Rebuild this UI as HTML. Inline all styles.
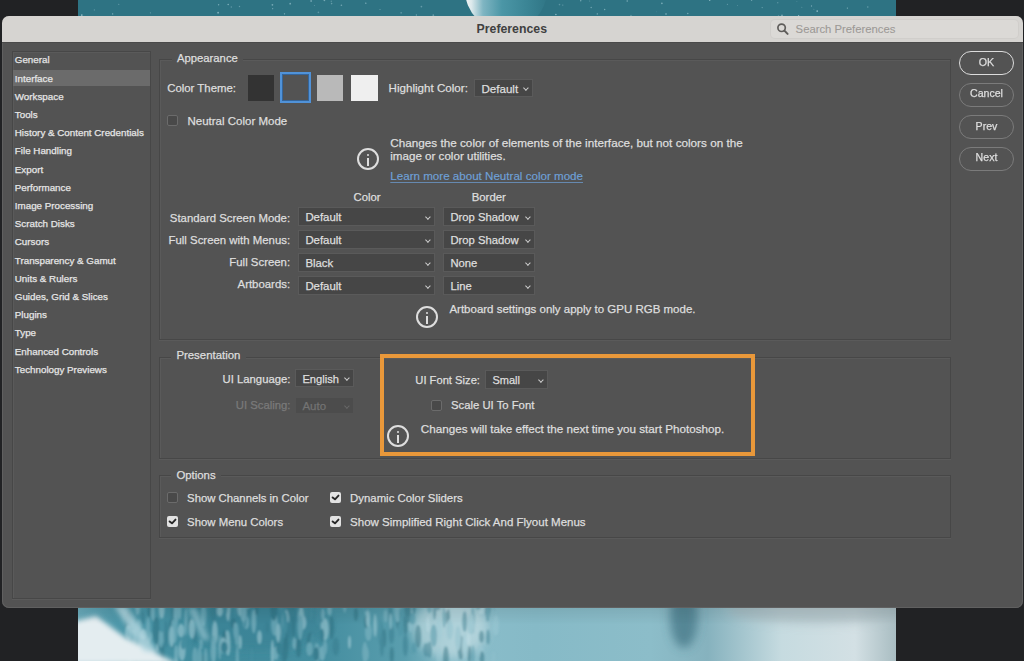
<!DOCTYPE html>
<html><head><meta charset="utf-8"><style>
*{margin:0;padding:0;box-sizing:border-box}
html,body{width:1024px;height:661px;overflow:hidden;background:#212224;font-family:"Liberation Sans",sans-serif}
.a{position:absolute}
.t{position:absolute;white-space:nowrap;line-height:1;color:#dedede;-webkit-text-stroke:0.25px currentColor}
.dd{position:absolute;background:#464646;box-shadow:0 0 0 1px #5a5a5a}
.chev{position:absolute;width:3.8px;height:3.8px;border-right:1.2px solid #d0d0d0;border-bottom:1.2px solid #d0d0d0;transform:rotate(45deg)}
.cb{position:absolute;width:11px;height:11px;background:#494949;border:1px solid #6b6b6b;border-radius:2px}
.cbc{position:absolute;width:11px;height:11px;background:#e2e2e2;border-radius:2px}
.box{position:absolute;border:1px solid #474747;box-shadow:0 1px 0 #5a5a5a, inset 1px 1px 0 #5a5a5a}
.btn{position:absolute;border-radius:12px;border:1.5px solid #7b7b7b}
.info{position:absolute;width:22px;height:22px;border:2px solid #dedede;border-radius:50%}
.info:before{content:"";position:absolute;left:7.6px;top:3.5px;width:2.8px;height:2.7px;background:#dedede;border-radius:1.2px}
.info:after{content:"";position:absolute;left:7.6px;top:7.7px;width:2.8px;height:8.2px;background:#dedede}
</style></head><body>
<div class="a" style="left:78px;top:0px;width:818px;height:661px;background:#2e7383;"></div>
<svg class="a" style="left:78px;top:0" width="818" height="16"><circle cx="194.7" cy="8.7" r="0.58" fill="#9cc6d0" opacity="0.70"/><circle cx="511.8" cy="1.0" r="0.41" fill="#9cc6d0" opacity="0.82"/><circle cx="212.2" cy="3.7" r="0.90" fill="#9cc6d0" opacity="0.64"/><circle cx="684.2" cy="7.6" r="0.72" fill="#9cc6d0" opacity="0.48"/><circle cx="519.3" cy="13.9" r="0.66" fill="#9cc6d0" opacity="0.77"/><circle cx="549.2" cy="1.0" r="0.78" fill="#9cc6d0" opacity="0.70"/><circle cx="246.4" cy="0.5" r="0.83" fill="#9cc6d0" opacity="0.64"/><circle cx="588.0" cy="14.1" r="0.76" fill="#9cc6d0" opacity="0.86"/><circle cx="323.1" cy="12.8" r="0.62" fill="#9cc6d0" opacity="0.87"/><circle cx="718.9" cy="1.6" r="0.47" fill="#9cc6d0" opacity="0.51"/><circle cx="789.8" cy="7.0" r="0.71" fill="#9cc6d0" opacity="0.55"/><circle cx="414.9" cy="6.2" r="0.58" fill="#9cc6d0" opacity="0.69"/><circle cx="477.9" cy="14.5" r="0.74" fill="#9cc6d0" opacity="0.86"/><circle cx="700.5" cy="15.9" r="0.74" fill="#9cc6d0" opacity="0.48"/><circle cx="704.0" cy="15.4" r="0.85" fill="#9cc6d0" opacity="0.68"/><circle cx="583.9" cy="3.4" r="0.82" fill="#9cc6d0" opacity="0.69"/><circle cx="233.1" cy="1.0" r="0.83" fill="#9cc6d0" opacity="0.89"/><circle cx="72.4" cy="12.8" r="0.61" fill="#9cc6d0" opacity="0.48"/><circle cx="240.4" cy="12.3" r="0.84" fill="#9cc6d0" opacity="0.42"/><circle cx="502.7" cy="0.7" r="0.76" fill="#9cc6d0" opacity="0.57"/><circle cx="720.6" cy="15.7" r="0.65" fill="#9cc6d0" opacity="0.90"/><circle cx="253.3" cy="1.2" r="0.70" fill="#9cc6d0" opacity="0.42"/><circle cx="161.5" cy="6.5" r="0.71" fill="#9cc6d0" opacity="0.48"/><circle cx="34.7" cy="13.9" r="0.56" fill="#9cc6d0" opacity="0.88"/><circle cx="733.5" cy="6.0" r="0.63" fill="#9cc6d0" opacity="0.66"/><circle cx="526.7" cy="9.5" r="0.68" fill="#9cc6d0" opacity="0.71"/><circle cx="769.4" cy="8.1" r="0.62" fill="#9cc6d0" opacity="0.76"/><circle cx="194.4" cy="4.8" r="0.89" fill="#9cc6d0" opacity="0.66"/><circle cx="448.6" cy="0.2" r="0.61" fill="#9cc6d0" opacity="0.69"/><circle cx="16.4" cy="9.9" r="0.72" fill="#9cc6d0" opacity="0.43"/><circle cx="513.2" cy="7.5" r="0.74" fill="#9cc6d0" opacity="0.58"/><circle cx="578.3" cy="11.8" r="0.41" fill="#9cc6d0" opacity="0.43"/><circle cx="553.0" cy="15.4" r="0.53" fill="#9cc6d0" opacity="0.63"/><circle cx="484.8" cy="5.1" r="0.58" fill="#9cc6d0" opacity="0.56"/><circle cx="302.0" cy="9.5" r="0.55" fill="#9cc6d0" opacity="0.59"/><circle cx="631.7" cy="0.4" r="0.68" fill="#9cc6d0" opacity="0.77"/><circle cx="253.6" cy="3.6" r="0.80" fill="#9cc6d0" opacity="0.52"/><circle cx="153.3" cy="7.0" r="0.75" fill="#9cc6d0" opacity="0.45"/><circle cx="263.4" cy="5.3" r="0.82" fill="#9cc6d0" opacity="0.62"/><circle cx="699.8" cy="2.7" r="0.57" fill="#9cc6d0" opacity="0.73"/><circle cx="723.8" cy="7.2" r="0.51" fill="#9cc6d0" opacity="0.46"/><circle cx="433.2" cy="3.1" r="0.80" fill="#9cc6d0" opacity="0.82"/><circle cx="150.2" cy="4.5" r="0.80" fill="#9cc6d0" opacity="0.72"/><circle cx="659.5" cy="5.5" r="0.46" fill="#9cc6d0" opacity="0.55"/><circle cx="649.4" cy="4.3" r="0.57" fill="#9cc6d0" opacity="0.61"/><circle cx="343.4" cy="6.6" r="0.86" fill="#9cc6d0" opacity="0.48"/><circle cx="3.8" cy="15.1" r="0.84" fill="#9cc6d0" opacity="0.89"/><circle cx="355.3" cy="15.2" r="0.86" fill="#9cc6d0" opacity="0.51"/><circle cx="609.8" cy="13.4" r="0.73" fill="#9cc6d0" opacity="0.66"/><circle cx="236.4" cy="5.5" r="0.51" fill="#9cc6d0" opacity="0.43"/><circle cx="481.5" cy="4.6" r="0.81" fill="#9cc6d0" opacity="0.42"/><circle cx="739.2" cy="11.1" r="0.86" fill="#9cc6d0" opacity="0.85"/><circle cx="735.9" cy="9.2" r="0.41" fill="#9cc6d0" opacity="0.77"/><circle cx="140.6" cy="4.8" r="0.73" fill="#9cc6d0" opacity="0.66"/><circle cx="338.4" cy="15.0" r="0.71" fill="#9cc6d0" opacity="0.57"/><circle cx="206.5" cy="13.8" r="0.64" fill="#9cc6d0" opacity="0.79"/><circle cx="287.8" cy="3.2" r="0.67" fill="#9cc6d0" opacity="0.81"/><circle cx="140.1" cy="12.7" r="0.86" fill="#9cc6d0" opacity="0.80"/><circle cx="673.6" cy="0.1" r="0.71" fill="#9cc6d0" opacity="0.83"/><circle cx="40.8" cy="4.3" r="0.53" fill="#9cc6d0" opacity="0.66"/></svg>
<svg class="a" style="left:78px;top:0" width="818" height="20"><defs><linearGradient id="pl" x1="0" x2="1" y1="0" y2="0"><stop offset="0" stop-color="#f2f6f7"/><stop offset="0.08" stop-color="#dce9ec"/><stop offset="0.22" stop-color="#7fb5c2"/><stop offset="0.45" stop-color="#4b96a6"/><stop offset="0.75" stop-color="#3b8595"/><stop offset="1" stop-color="#307686"/></linearGradient></defs><circle cx="428" cy="-10" r="41" fill="url(#pl)"/></svg>
<svg class="a" style="left:78px;top:600px" width="818" height="61"><defs>
<linearGradient id="wf" x1="0" x2="1" y1="0" y2="0">
<stop offset="0" stop-color="#6aaaba"/><stop offset="0.05" stop-color="#4d97a9"/><stop offset="0.15" stop-color="#3f8a9c"/>
<stop offset="0.3" stop-color="#458ea0"/><stop offset="0.4" stop-color="#5a9eae"/><stop offset="0.46" stop-color="#8abdca"/>
<stop offset="0.56" stop-color="#86bac7"/><stop offset="0.7" stop-color="#8cbdc9"/><stop offset="0.77" stop-color="#86b2be"/>
<stop offset="0.86" stop-color="#c6dbe0"/><stop offset="0.95" stop-color="#d3e0e4"/><stop offset="1" stop-color="#a9bdc2"/></linearGradient>
<linearGradient id="vg" x1="0" x2="0" y1="0" y2="1"><stop offset="0" stop-color="#000" stop-opacity="0.12"/><stop offset="0.4" stop-color="#000" stop-opacity="0"/></linearGradient>
<filter id="bl" x="-50%" y="-50%" width="200%" height="200%"><feGaussianBlur stdDeviation="5"/></filter>
<filter id="bl3" x="-50%" y="-50%" width="200%" height="200%"><feGaussianBlur stdDeviation="1.3"/></filter>
<filter id="bl2" x="-50%" y="-50%" width="200%" height="200%"><feGaussianBlur stdDeviation="2.5"/></filter>
</defs>
<rect width="818" height="61" fill="url(#wf)"/>
<g filter="url(#bl)">

<ellipse cx="180" cy="24" rx="70" ry="26" fill="#34798b" opacity="0.35"/>
<ellipse cx="372" cy="28" rx="38" ry="30" fill="#cfe3e8" opacity="0.55"/>
<ellipse cx="606" cy="16" rx="14" ry="32" fill="#3f7282" opacity="0.7"/>
<ellipse cx="740" cy="10" rx="90" ry="14" fill="#a3b6bb" opacity="0.6"/>
</g>
<g filter="url(#bl3)" opacity="0.45"><ellipse cx="169.8" cy="9.2" rx="2.8" ry="5.7" fill="#35788a"/><ellipse cx="84.8" cy="35.6" rx="3.3" ry="6.9" fill="#9fcbd6"/><ellipse cx="210.4" cy="4.3" rx="1.7" ry="8.8" fill="#35788a"/><ellipse cx="95.8" cy="13.6" rx="2.8" ry="13.5" fill="#35788a"/><ellipse cx="266.7" cy="3.0" rx="1.9" ry="10.0" fill="#8fc0cc"/><ellipse cx="157.2" cy="8.8" rx="1.7" ry="7.8" fill="#4a90a2"/><ellipse cx="116.9" cy="35.5" rx="2.8" ry="8.4" fill="#35788a"/><ellipse cx="313.5" cy="34.4" rx="2.7" ry="9.5" fill="#35788a"/><ellipse cx="208.2" cy="19.2" rx="2.7" ry="9.1" fill="#c2e0e7"/><ellipse cx="141.9" cy="11.0" rx="3.1" ry="5.7" fill="#c2e0e7"/><ellipse cx="244.3" cy="53.4" rx="3.0" ry="7.6" fill="#9fcbd6"/><ellipse cx="93.7" cy="25.5" rx="3.0" ry="6.4" fill="#2c6a7a"/><ellipse cx="206.0" cy="58.7" rx="1.7" ry="10.0" fill="#c2e0e7"/><ellipse cx="175.8" cy="21.4" rx="2.5" ry="12.2" fill="#9fcbd6"/><ellipse cx="360.8" cy="57.6" rx="2.4" ry="11.0" fill="#9fcbd6"/><ellipse cx="320.5" cy="18.9" rx="2.7" ry="11.1" fill="#2c6a7a"/><ellipse cx="155.3" cy="23.5" rx="2.8" ry="5.2" fill="#2c6a7a"/><ellipse cx="181.5" cy="37.3" rx="2.5" ry="7.0" fill="#c2e0e7"/><ellipse cx="97.9" cy="15.1" rx="2.3" ry="12.8" fill="#9fcbd6"/><ellipse cx="111.6" cy="24.5" rx="2.1" ry="6.2" fill="#2c6a7a"/><ellipse cx="369.7" cy="17.0" rx="2.3" ry="8.2" fill="#2c6a7a"/><ellipse cx="404.4" cy="9.2" rx="1.9" ry="7.1" fill="#8fc0cc"/><ellipse cx="54.5" cy="50.7" rx="1.9" ry="7.5" fill="#8fc0cc"/><ellipse cx="205.0" cy="22.5" rx="2.6" ry="13.6" fill="#4a90a2"/><ellipse cx="367.9" cy="58.0" rx="2.8" ry="11.7" fill="#2c6a7a"/><ellipse cx="382.8" cy="47.6" rx="3.2" ry="12.2" fill="#2c6a7a"/><ellipse cx="197.3" cy="24.0" rx="2.5" ry="8.6" fill="#8fc0cc"/><ellipse cx="74.9" cy="12.7" rx="1.8" ry="8.1" fill="#9fcbd6"/><ellipse cx="87.9" cy="34.6" rx="2.6" ry="13.5" fill="#35788a"/><ellipse cx="59.4" cy="53.3" rx="2.7" ry="6.3" fill="#c2e0e7"/><ellipse cx="403.5" cy="36.7" rx="2.4" ry="6.0" fill="#2c6a7a"/><ellipse cx="417.4" cy="28.4" rx="2.5" ry="5.8" fill="#9fcbd6"/><ellipse cx="327.4" cy="45.2" rx="2.5" ry="11.2" fill="#35788a"/><ellipse cx="58.5" cy="58.0" rx="2.6" ry="6.3" fill="#35788a"/><ellipse cx="388.2" cy="46.2" rx="2.1" ry="10.8" fill="#9fcbd6"/><ellipse cx="307.6" cy="15.9" rx="2.2" ry="6.5" fill="#8fc0cc"/><ellipse cx="247.1" cy="47.5" rx="2.2" ry="7.0" fill="#8fc0cc"/><ellipse cx="348.2" cy="49.9" rx="3.0" ry="7.0" fill="#35788a"/><ellipse cx="232.3" cy="44.6" rx="3.5" ry="12.1" fill="#2c6a7a"/><ellipse cx="145.9" cy="42.2" rx="3.4" ry="9.0" fill="#4a90a2"/><ellipse cx="415.6" cy="58.3" rx="2.2" ry="7.0" fill="#8fc0cc"/><ellipse cx="223.9" cy="20.6" rx="2.5" ry="13.9" fill="#35788a"/><ellipse cx="361.0" cy="29.2" rx="2.8" ry="12.2" fill="#9fcbd6"/><ellipse cx="358.8" cy="7.3" rx="2.3" ry="11.4" fill="#8fc0cc"/><ellipse cx="226.9" cy="10.9" rx="3.1" ry="8.0" fill="#4a90a2"/><ellipse cx="196.5" cy="24.5" rx="3.4" ry="11.5" fill="#8fc0cc"/><ellipse cx="417.5" cy="1.7" rx="2.7" ry="9.2" fill="#4a90a2"/><ellipse cx="104.1" cy="50.4" rx="3.5" ry="10.9" fill="#c2e0e7"/><ellipse cx="107.7" cy="33.4" rx="1.5" ry="12.2" fill="#4a90a2"/><ellipse cx="290.4" cy="32.1" rx="3.4" ry="8.9" fill="#8fc0cc"/><ellipse cx="355.7" cy="12.9" rx="2.0" ry="7.6" fill="#8fc0cc"/><ellipse cx="332.6" cy="19.9" rx="2.6" ry="12.5" fill="#9fcbd6"/><ellipse cx="386.7" cy="21.6" rx="2.4" ry="10.3" fill="#35788a"/><ellipse cx="205.6" cy="56.0" rx="2.5" ry="9.8" fill="#35788a"/><ellipse cx="238.9" cy="53.2" rx="3.1" ry="10.5" fill="#8fc0cc"/><ellipse cx="113.8" cy="28.9" rx="3.0" ry="10.0" fill="#c2e0e7"/><ellipse cx="302.5" cy="32.4" rx="2.5" ry="12.0" fill="#35788a"/><ellipse cx="71.0" cy="11.7" rx="1.6" ry="5.9" fill="#2c6a7a"/><ellipse cx="257.8" cy="46.4" rx="3.3" ry="9.0" fill="#35788a"/><ellipse cx="410.1" cy="37.0" rx="1.9" ry="7.5" fill="#35788a"/><ellipse cx="247.3" cy="29.2" rx="3.4" ry="11.3" fill="#c2e0e7"/><ellipse cx="391.4" cy="54.5" rx="1.9" ry="9.0" fill="#2c6a7a"/><ellipse cx="95.0" cy="27.0" rx="1.6" ry="7.2" fill="#9fcbd6"/><ellipse cx="128.7" cy="18.5" rx="1.7" ry="12.0" fill="#4a90a2"/><ellipse cx="288.1" cy="22.3" rx="2.0" ry="6.2" fill="#2c6a7a"/><ellipse cx="131.2" cy="58.1" rx="2.3" ry="9.4" fill="#4a90a2"/><ellipse cx="358.0" cy="9.8" rx="2.4" ry="9.6" fill="#c2e0e7"/><ellipse cx="205.9" cy="21.8" rx="1.7" ry="8.3" fill="#c2e0e7"/><ellipse cx="255.0" cy="26.9" rx="1.5" ry="8.0" fill="#35788a"/><ellipse cx="159.3" cy="58.6" rx="1.7" ry="13.3" fill="#8fc0cc"/><ellipse cx="409.5" cy="6.4" rx="2.0" ry="5.4" fill="#8fc0cc"/><ellipse cx="150.1" cy="7.9" rx="2.3" ry="13.2" fill="#c2e0e7"/><ellipse cx="200.2" cy="32.7" rx="2.5" ry="9.5" fill="#c2e0e7"/><ellipse cx="83.1" cy="3.5" rx="2.9" ry="8.8" fill="#9fcbd6"/><ellipse cx="149.5" cy="1.0" rx="1.7" ry="7.3" fill="#35788a"/><ellipse cx="366.8" cy="4.1" rx="3.2" ry="9.1" fill="#c2e0e7"/><ellipse cx="417.9" cy="25.5" rx="3.3" ry="10.6" fill="#9fcbd6"/><ellipse cx="245.0" cy="14.5" rx="1.7" ry="6.5" fill="#9fcbd6"/><ellipse cx="117.0" cy="56.9" rx="2.8" ry="9.8" fill="#8fc0cc"/><ellipse cx="157.3" cy="30.5" rx="1.9" ry="8.1" fill="#9fcbd6"/><ellipse cx="418.0" cy="2.3" rx="1.5" ry="9.6" fill="#8fc0cc"/><ellipse cx="240.3" cy="15.0" rx="2.4" ry="10.9" fill="#4a90a2"/><ellipse cx="209.9" cy="30.2" rx="3.2" ry="8.5" fill="#35788a"/><ellipse cx="163.9" cy="13.1" rx="2.0" ry="6.8" fill="#4a90a2"/><ellipse cx="319.7" cy="8.5" rx="3.5" ry="13.8" fill="#8fc0cc"/><ellipse cx="55.3" cy="38.2" rx="3.3" ry="8.9" fill="#9fcbd6"/><ellipse cx="81.3" cy="51.3" rx="3.2" ry="11.0" fill="#c2e0e7"/><ellipse cx="271.5" cy="42.3" rx="1.6" ry="6.7" fill="#c2e0e7"/><ellipse cx="215.0" cy="16.1" rx="3.4" ry="13.8" fill="#35788a"/><ellipse cx="169.7" cy="2.1" rx="3.3" ry="7.0" fill="#8fc0cc"/><ellipse cx="50.4" cy="23.3" rx="2.4" ry="9.5" fill="#8fc0cc"/><ellipse cx="141.8" cy="47.4" rx="1.7" ry="12.4" fill="#8fc0cc"/><ellipse cx="197.8" cy="2.5" rx="1.5" ry="7.7" fill="#8fc0cc"/><ellipse cx="81.3" cy="58.4" rx="3.2" ry="6.4" fill="#4a90a2"/><ellipse cx="340.1" cy="36.4" rx="3.0" ry="11.5" fill="#2c6a7a"/><ellipse cx="105.3" cy="44.2" rx="2.8" ry="5.4" fill="#4a90a2"/><ellipse cx="380.0" cy="38.3" rx="3.0" ry="12.3" fill="#8fc0cc"/><ellipse cx="386.7" cy="45.9" rx="2.6" ry="12.3" fill="#9fcbd6"/><ellipse cx="355.8" cy="35.6" rx="3.3" ry="11.1" fill="#4a90a2"/><ellipse cx="287.9" cy="5.2" rx="1.6" ry="10.7" fill="#9fcbd6"/><ellipse cx="189.3" cy="27.5" rx="1.6" ry="5.2" fill="#35788a"/><ellipse cx="301.8" cy="29.8" rx="1.5" ry="12.2" fill="#4a90a2"/><ellipse cx="395.0" cy="54.8" rx="1.7" ry="9.7" fill="#4a90a2"/><ellipse cx="322.6" cy="15.4" rx="1.6" ry="7.4" fill="#4a90a2"/><ellipse cx="329.9" cy="14.1" rx="2.8" ry="9.1" fill="#2c6a7a"/><ellipse cx="78.4" cy="55.5" rx="2.1" ry="5.4" fill="#4a90a2"/><ellipse cx="287.8" cy="4.7" rx="1.8" ry="7.3" fill="#4a90a2"/><ellipse cx="306.4" cy="37.9" rx="1.8" ry="9.3" fill="#2c6a7a"/><ellipse cx="149.4" cy="41.0" rx="2.9" ry="11.1" fill="#c2e0e7"/><ellipse cx="312.3" cy="17.4" rx="2.4" ry="11.9" fill="#35788a"/><ellipse cx="123.7" cy="59.7" rx="3.4" ry="5.2" fill="#2c6a7a"/><ellipse cx="78.3" cy="30.9" rx="3.5" ry="13.9" fill="#2c6a7a"/><ellipse cx="127.6" cy="57.7" rx="1.9" ry="10.2" fill="#8fc0cc"/><ellipse cx="326.6" cy="16.0" rx="2.2" ry="10.4" fill="#4a90a2"/><ellipse cx="238.2" cy="54.1" rx="2.9" ry="7.1" fill="#2c6a7a"/><ellipse cx="195.8" cy="9.7" rx="3.4" ry="11.1" fill="#2c6a7a"/><ellipse cx="161.7" cy="8.6" rx="2.2" ry="7.8" fill="#c2e0e7"/><ellipse cx="50.6" cy="45.8" rx="3.2" ry="6.1" fill="#8fc0cc"/><ellipse cx="313.8" cy="55.0" rx="2.1" ry="8.3" fill="#2c6a7a"/><ellipse cx="194.4" cy="53.1" rx="1.7" ry="13.3" fill="#c2e0e7"/><ellipse cx="366.1" cy="17.1" rx="1.6" ry="11.0" fill="#4a90a2"/><ellipse cx="396.2" cy="15.2" rx="2.0" ry="9.6" fill="#8fc0cc"/><ellipse cx="336.1" cy="47.9" rx="2.4" ry="5.3" fill="#4a90a2"/><ellipse cx="198.0" cy="53.4" rx="2.6" ry="6.8" fill="#9fcbd6"/><ellipse cx="68.3" cy="44.7" rx="2.4" ry="11.8" fill="#4a90a2"/><ellipse cx="371.7" cy="29.6" rx="3.3" ry="10.0" fill="#8fc0cc"/><ellipse cx="224.7" cy="21.0" rx="2.1" ry="11.7" fill="#4a90a2"/><ellipse cx="146.3" cy="40.0" rx="2.1" ry="10.0" fill="#2c6a7a"/><ellipse cx="94.3" cy="39.2" rx="1.7" ry="9.5" fill="#2c6a7a"/><ellipse cx="253.6" cy="27.6" rx="2.2" ry="11.8" fill="#2c6a7a"/><ellipse cx="101.7" cy="11.7" rx="1.7" ry="8.1" fill="#9fcbd6"/><ellipse cx="168.1" cy="22.5" rx="3.1" ry="6.8" fill="#9fcbd6"/><ellipse cx="327.4" cy="25.2" rx="2.3" ry="9.7" fill="#2c6a7a"/><ellipse cx="150.0" cy="45.9" rx="2.5" ry="10.2" fill="#c2e0e7"/><ellipse cx="96.6" cy="30.7" rx="2.8" ry="12.8" fill="#8fc0cc"/><ellipse cx="84.3" cy="54.7" rx="2.3" ry="10.8" fill="#2c6a7a"/><ellipse cx="403.0" cy="51.8" rx="3.2" ry="5.2" fill="#9fcbd6"/><ellipse cx="207.3" cy="46.6" rx="3.1" ry="13.7" fill="#2c6a7a"/><ellipse cx="50.1" cy="23.9" rx="3.4" ry="12.4" fill="#2c6a7a"/><ellipse cx="409.7" cy="15.2" rx="1.7" ry="6.4" fill="#35788a"/><ellipse cx="409.6" cy="6.6" rx="3.2" ry="11.3" fill="#2c6a7a"/><ellipse cx="81.5" cy="47.4" rx="1.5" ry="6.1" fill="#35788a"/><ellipse cx="390.4" cy="39.4" rx="2.1" ry="6.2" fill="#c2e0e7"/><ellipse cx="245.5" cy="26.7" rx="3.0" ry="5.9" fill="#c2e0e7"/><ellipse cx="244.0" cy="35.6" rx="2.3" ry="7.0" fill="#35788a"/><ellipse cx="50.4" cy="32.8" rx="3.5" ry="7.5" fill="#c2e0e7"/><ellipse cx="288.5" cy="53.9" rx="2.5" ry="7.1" fill="#8fc0cc"/><ellipse cx="60.8" cy="25.1" rx="2.8" ry="5.5" fill="#8fc0cc"/><ellipse cx="234.4" cy="41.1" rx="2.3" ry="7.3" fill="#4a90a2"/><ellipse cx="207.0" cy="22.6" rx="2.5" ry="11.3" fill="#4a90a2"/><ellipse cx="205.6" cy="41.6" rx="1.9" ry="12.2" fill="#4a90a2"/><ellipse cx="362.7" cy="4.1" rx="2.5" ry="6.8" fill="#8fc0cc"/><ellipse cx="135.4" cy="13.5" rx="3.0" ry="7.7" fill="#35788a"/><ellipse cx="233.4" cy="11.4" rx="1.9" ry="8.8" fill="#4a90a2"/><ellipse cx="70.9" cy="36.3" rx="3.3" ry="5.5" fill="#9fcbd6"/><ellipse cx="410.4" cy="8.7" rx="1.6" ry="5.5" fill="#2c6a7a"/><ellipse cx="216.4" cy="43.4" rx="2.1" ry="6.0" fill="#9fcbd6"/><ellipse cx="394.7" cy="20.1" rx="1.9" ry="13.4" fill="#4a90a2"/><ellipse cx="223.0" cy="19.0" rx="3.0" ry="12.6" fill="#c2e0e7"/><ellipse cx="213.7" cy="6.6" rx="1.7" ry="5.7" fill="#2c6a7a"/><ellipse cx="403.5" cy="7.5" rx="3.4" ry="6.9" fill="#c2e0e7"/><ellipse cx="334.4" cy="18.8" rx="3.1" ry="5.8" fill="#4a90a2"/><ellipse cx="225.2" cy="22.7" rx="3.3" ry="6.7" fill="#c2e0e7"/><ellipse cx="322.8" cy="28.9" rx="2.8" ry="7.2" fill="#4a90a2"/><ellipse cx="333.7" cy="2.5" rx="1.6" ry="5.6" fill="#9fcbd6"/><ellipse cx="145.1" cy="45.6" rx="3.3" ry="8.1" fill="#c2e0e7"/><ellipse cx="173.9" cy="58.2" rx="1.6" ry="11.7" fill="#4a90a2"/><ellipse cx="167.1" cy="16.8" rx="1.5" ry="11.8" fill="#4a90a2"/><ellipse cx="400.2" cy="4.0" rx="3.2" ry="6.0" fill="#4a90a2"/><ellipse cx="404.0" cy="58.2" rx="2.3" ry="7.3" fill="#2c6a7a"/><ellipse cx="351.5" cy="8.1" rx="2.5" ry="5.1" fill="#4a90a2"/><ellipse cx="162.2" cy="42.2" rx="1.8" ry="7.1" fill="#c2e0e7"/><ellipse cx="220.5" cy="47.8" rx="2.7" ry="9.6" fill="#2c6a7a"/><ellipse cx="328.6" cy="15.1" rx="1.6" ry="5.3" fill="#35788a"/><ellipse cx="251.5" cy="9.8" rx="2.4" ry="5.9" fill="#9fcbd6"/><ellipse cx="148.0" cy="5.1" rx="1.7" ry="9.5" fill="#4a90a2"/><ellipse cx="409.7" cy="10.6" rx="1.8" ry="9.1" fill="#4a90a2"/><ellipse cx="136.9" cy="32.9" rx="3.0" ry="11.8" fill="#c2e0e7"/><ellipse cx="158.7" cy="34.6" rx="2.2" ry="11.6" fill="#8fc0cc"/><ellipse cx="212.6" cy="11.3" rx="2.0" ry="7.5" fill="#35788a"/><ellipse cx="119.7" cy="4.0" rx="2.0" ry="7.2" fill="#35788a"/><ellipse cx="135.6" cy="49.3" rx="2.8" ry="13.9" fill="#9fcbd6"/><ellipse cx="51.7" cy="53.9" rx="2.0" ry="9.0" fill="#c2e0e7"/><ellipse cx="64.9" cy="17.9" rx="1.7" ry="6.7" fill="#35788a"/><ellipse cx="121.8" cy="4.6" rx="2.5" ry="6.6" fill="#35788a"/><ellipse cx="146.2" cy="47.4" rx="3.4" ry="6.0" fill="#35788a"/><ellipse cx="312.6" cy="21.3" rx="1.6" ry="8.1" fill="#9fcbd6"/><ellipse cx="125.5" cy="15.5" rx="2.7" ry="10.9" fill="#8fc0cc"/><ellipse cx="351.5" cy="49.9" rx="2.3" ry="8.3" fill="#35788a"/><ellipse cx="165.5" cy="12.4" rx="3.1" ry="9.9" fill="#9fcbd6"/><ellipse cx="201.0" cy="48.5" rx="2.8" ry="6.4" fill="#35788a"/><ellipse cx="83.7" cy="10.0" rx="2.9" ry="8.7" fill="#c2e0e7"/><ellipse cx="297.1" cy="25.5" rx="1.6" ry="11.7" fill="#c2e0e7"/><ellipse cx="203.2" cy="1.1" rx="3.0" ry="12.2" fill="#4a90a2"/><ellipse cx="123.0" cy="44.4" rx="1.9" ry="5.1" fill="#8fc0cc"/><ellipse cx="206.8" cy="50.0" rx="2.3" ry="12.9" fill="#2c6a7a"/><ellipse cx="336.0" cy="7.9" rx="1.6" ry="6.3" fill="#2c6a7a"/><ellipse cx="82.9" cy="38.0" rx="2.2" ry="9.5" fill="#8fc0cc"/><ellipse cx="178.7" cy="9.9" rx="1.8" ry="5.6" fill="#2c6a7a"/><ellipse cx="231.5" cy="49.1" rx="3.4" ry="6.8" fill="#8fc0cc"/><ellipse cx="359.8" cy="2.7" rx="3.3" ry="7.8" fill="#35788a"/><ellipse cx="392.7" cy="23.7" rx="3.3" ry="10.6" fill="#8fc0cc"/><ellipse cx="286.9" cy="52.3" rx="2.7" ry="10.5" fill="#8fc0cc"/><ellipse cx="356.8" cy="11.2" rx="1.9" ry="8.6" fill="#35788a"/><ellipse cx="107.9" cy="21.9" rx="1.8" ry="13.7" fill="#8fc0cc"/><ellipse cx="65.2" cy="34.3" rx="3.0" ry="5.3" fill="#c2e0e7"/><ellipse cx="93.6" cy="36.6" rx="2.6" ry="10.6" fill="#c2e0e7"/><ellipse cx="290.1" cy="18.8" rx="2.0" ry="8.5" fill="#c2e0e7"/><ellipse cx="215.3" cy="26.7" rx="1.5" ry="10.6" fill="#2c6a7a"/><ellipse cx="222.2" cy="27.3" rx="2.7" ry="12.4" fill="#8fc0cc"/><ellipse cx="349.9" cy="24.4" rx="1.6" ry="8.2" fill="#c2e0e7"/><ellipse cx="83.9" cy="27.0" rx="2.5" ry="5.4" fill="#4a90a2"/><ellipse cx="98.2" cy="56.2" rx="2.1" ry="11.5" fill="#9fcbd6"/><ellipse cx="70.1" cy="30.7" rx="2.3" ry="13.6" fill="#8fc0cc"/><ellipse cx="59.6" cy="4.0" rx="2.7" ry="11.2" fill="#9fcbd6"/><ellipse cx="121.7" cy="59.9" rx="2.5" ry="13.6" fill="#8fc0cc"/><ellipse cx="303.9" cy="44.0" rx="1.9" ry="12.5" fill="#35788a"/><ellipse cx="329.8" cy="9.7" rx="3.3" ry="7.5" fill="#2c6a7a"/><ellipse cx="103.1" cy="30.6" rx="3.3" ry="6.9" fill="#c2e0e7"/><ellipse cx="277.9" cy="14.5" rx="2.2" ry="6.8" fill="#2c6a7a"/></g><g filter="url(#bl2)"><path d="M-5 22 L18 16 L48 38 L100 64 L-5 64Z" fill="#e4edf0"/><path d="M36 6 L48 6 L80 52 L66 52Z" fill="#b8dae2" opacity="0.8"/><path d="M110 8 L118 8 L132 40 L124 40Z" fill="#a9d1da" opacity="0.6"/></g>
<rect width="818" height="61" fill="url(#vg)"/>
</svg>
<div class="a" style="left:2px;top:16px;width:1021px;height:592px;background:#535353;border-radius:7px;overflow:hidden;box-shadow:inset 0 0 0 1px #606060">
<div class="a" style="left:0;top:0;width:1021px;height:27px;background:#d6d4d1;border-bottom:1px solid #4a4a4a"></div>
</div>
<div class="t " style="left:311.80px;width:400px;text-align:center;top:22.79px;font-size:12.3px;color:#404040;font-weight:bold;-webkit-text-stroke:0;">Preferences</div>
<div class="a" style="left:771px;top:20px;width:247px;height:18px;background:#dbd9d6;border-radius:4px;box-shadow:0 0 0 1px #d0cecb;"></div>
<svg class="a" style="left:774px;top:20px" width="18" height="18"><circle cx="7.6" cy="7.8" r="3.7" fill="none" stroke="#5f5d5b" stroke-width="1.7"/><line x1="10.4" y1="10.6" x2="13.6" y2="13.9" stroke="#5f5d5b" stroke-width="2" stroke-linecap="round"/></svg>
<div class="t " style="left:795.60px;top:23.73px;font-size:11.3px;color:#9d9a97;-webkit-text-stroke:0.1px #9d9a97;">Search Preferences</div>
<div class="box" style="left:12px;top:51px;width:139px;height:548px;"></div>
<div class="a" style="left:13px;top:70px;width:137px;height:16px;background:#6b6b6b;"></div>
<div class="t " style="left:14.80px;top:55.30px;font-size:9.8px;color:#e6e6e6;">General</div>
<div class="t " style="left:14.80px;top:73.50px;font-size:9.8px;color:#e6e6e6;">Interface</div>
<div class="t " style="left:14.80px;top:91.70px;font-size:9.8px;color:#e6e6e6;">Workspace</div>
<div class="t " style="left:14.80px;top:109.90px;font-size:9.8px;color:#e6e6e6;">Tools</div>
<div class="t " style="left:14.80px;top:128.10px;font-size:9.8px;color:#e6e6e6;">History &amp; Content Credentials</div>
<div class="t " style="left:14.80px;top:146.30px;font-size:9.8px;color:#e6e6e6;">File Handling</div>
<div class="t " style="left:14.80px;top:164.50px;font-size:9.8px;color:#e6e6e6;">Export</div>
<div class="t " style="left:14.80px;top:182.70px;font-size:9.8px;color:#e6e6e6;">Performance</div>
<div class="t " style="left:14.80px;top:200.90px;font-size:9.8px;color:#e6e6e6;">Image Processing</div>
<div class="t " style="left:14.80px;top:219.10px;font-size:9.8px;color:#e6e6e6;">Scratch Disks</div>
<div class="t " style="left:14.80px;top:237.30px;font-size:9.8px;color:#e6e6e6;">Cursors</div>
<div class="t " style="left:14.80px;top:255.50px;font-size:9.8px;color:#e6e6e6;">Transparency &amp; Gamut</div>
<div class="t " style="left:14.80px;top:273.70px;font-size:9.8px;color:#e6e6e6;">Units &amp; Rulers</div>
<div class="t " style="left:14.80px;top:291.90px;font-size:9.8px;color:#e6e6e6;">Guides, Grid &amp; Slices</div>
<div class="t " style="left:14.80px;top:310.10px;font-size:9.8px;color:#e6e6e6;">Plugins</div>
<div class="t " style="left:14.80px;top:328.30px;font-size:9.8px;color:#e6e6e6;">Type</div>
<div class="t " style="left:14.80px;top:346.50px;font-size:9.8px;color:#e6e6e6;">Enhanced Controls</div>
<div class="t " style="left:14.80px;top:364.70px;font-size:9.8px;color:#e6e6e6;">Technology Previews</div>
<div class="box" style="left:159px;top:59px;width:792px;height:281px;"></div>
<div class="a" style="left:171.9px;top:57px;width:71px;height:4px;background:#535353;"></div>
<div class="t " style="left:176.90px;top:52.73px;font-size:11.3px;">Appearance</div>
<div class="box" style="left:159px;top:357px;width:792px;height:102px;"></div>
<div class="a" style="left:171.4px;top:355px;width:74.4px;height:4px;background:#535353;"></div>
<div class="t " style="left:176.40px;top:350.25px;font-size:11.4px;">Presentation</div>
<div class="box" style="left:159px;top:475px;width:792px;height:63px;"></div>
<div class="a" style="left:171.4px;top:473px;width:49.6px;height:4px;background:#535353;"></div>
<div class="t " style="left:176.40px;top:469.95px;font-size:11.4px;">Options</div>
<div class="t " style="left:167.20px;top:83.25px;font-size:11.4px;">Color Theme:</div>
<div class="a" style="left:248px;top:75px;width:26px;height:26px;background:#333333;"></div>
<div class="a" style="left:280px;top:72px;width:31px;height:31px;border:2px solid #5092d8;box-shadow:inset 0 0 0 1px #35659a;background:#535353;"></div>
<div class="a" style="left:317px;top:75px;width:26px;height:26px;background:#b9b9b9;"></div>
<div class="a" style="left:351px;top:75px;width:27px;height:26px;background:#efefef;"></div>
<div class="t " style="left:388.60px;top:82.48px;font-size:11.6px;">Highlight Color:</div>
<div class="dd" style="left:475px;top:80px;width:57px;height:16px;"></div>
<div class="t " style="left:481.40px;top:83.38px;font-size:11.6px;">Default</div>
<div class="chev" style="left:524.2px;top:86.0px;"></div>
<div class="cb" style="left:167px;top:115px;width:11px;height:11px;"></div>
<div class="t " style="left:187.50px;top:115.87px;font-size:11.5px;">Neutral Color Mode</div>
<div class="info" style="left:357px;top:148px"></div>
<div class="t " style="left:390.30px;top:137.48px;font-size:11.72px;">Changes the color of elements of the interface, but not colors on the</div>
<div class="t " style="left:390.30px;top:150.48px;font-size:11.6px;">image or color utilities.</div>
<div class="t " style="left:390.30px;top:169.68px;font-size:11.6px;color:#6fa1d9;text-decoration:underline;text-underline-offset:1.5px;text-decoration-thickness:1px;text-decoration-color:rgba(111,161,217,0.7);-webkit-text-stroke:0.15px currentColor;">Learn more about Neutral color mode</div>
<div class="t " style="left:353.50px;top:192.43px;font-size:11.3px;">Color</div>
<div class="t " style="left:471.70px;top:192.35px;font-size:11.4px;">Border</div>
<div class="t " style="right:733.90px;top:213.35px;font-size:11.4px;">Standard Screen Mode:</div>
<div class="dd" style="left:299px;top:208px;width:135px;height:17px;"></div>
<div class="t " style="left:305.40px;top:212.05px;font-size:11.4px;">Default</div>
<div class="chev" style="left:426.2px;top:214.5px;"></div>
<div class="dd" style="left:444px;top:208px;width:90px;height:17px;"></div>
<div class="t " style="left:450.40px;top:212.18px;font-size:11.25px;">Drop Shadow</div>
<div class="chev" style="left:526.2px;top:214.5px;"></div>
<div class="t " style="right:733.90px;top:235.25px;font-size:11.4px;">Full Screen with Menus:</div>
<div class="dd" style="left:299px;top:231px;width:135px;height:17px;"></div>
<div class="t " style="left:305.40px;top:235.05px;font-size:11.4px;">Default</div>
<div class="chev" style="left:426.2px;top:237.5px;"></div>
<div class="dd" style="left:444px;top:231px;width:90px;height:17px;"></div>
<div class="t " style="left:450.40px;top:235.18px;font-size:11.25px;">Drop Shadow</div>
<div class="chev" style="left:526.2px;top:237.5px;"></div>
<div class="t " style="right:733.90px;top:256.65px;font-size:11.4px;">Full Screen:</div>
<div class="dd" style="left:299px;top:254px;width:135px;height:17px;"></div>
<div class="t " style="left:305.40px;top:258.05px;font-size:11.4px;">Black</div>
<div class="chev" style="left:426.2px;top:260.5px;"></div>
<div class="dd" style="left:444px;top:254px;width:90px;height:17px;"></div>
<div class="t " style="left:450.40px;top:258.18px;font-size:11.25px;">None</div>
<div class="chev" style="left:526.2px;top:260.5px;"></div>
<div class="t " style="right:733.90px;top:279.15px;font-size:11.4px;">Artboards:</div>
<div class="dd" style="left:299px;top:277px;width:135px;height:17px;"></div>
<div class="t " style="left:305.40px;top:281.05px;font-size:11.4px;">Default</div>
<div class="chev" style="left:426.2px;top:283.5px;"></div>
<div class="dd" style="left:444px;top:277px;width:90px;height:17px;"></div>
<div class="t " style="left:450.40px;top:281.18px;font-size:11.25px;">Line</div>
<div class="chev" style="left:526.2px;top:283.5px;"></div>
<div class="info" style="left:416px;top:306px"></div>
<div class="t " style="left:449.40px;top:303.77px;font-size:11.5px;">Artboard settings only apply to GPU RGB mode.</div>
<div class="t " style="right:733.60px;top:373.93px;font-size:11.3px;">UI Language:</div>
<div class="dd" style="left:296px;top:370px;width:57px;height:16px;"></div>
<div class="t " style="left:302.40px;top:373.76px;font-size:11.15px;">English</div>
<div class="chev" style="left:345.2px;top:376.0px;"></div>
<div class="t " style="right:733.60px;top:400.03px;font-size:11.3px;color:#7a7a7a;">UI Scaling:</div>
<div class="dd" style="left:296px;top:398px;width:57px;height:15px;background:#4c4c4c;box-shadow:none;"></div>
<div class="t " style="left:302.40px;top:400.97px;font-size:11.5px;color:#737373;">Auto</div>
<div class="chev" style="left:345.2px;top:403.5px;border-color:#686868;"></div>
<div class="a" style="left:380px;top:354px;width:375px;height:102px;border:4px solid #e9983a;"></div>
<div class="t " style="left:415.30px;top:375.22px;font-size:11.2px;">UI Font Size:</div>
<div class="dd" style="left:486px;top:371px;width:61px;height:17px;"></div>
<div class="t " style="left:492.40px;top:375.39px;font-size:11.0px;">Small</div>
<div class="chev" style="left:539.2px;top:377.5px;"></div>
<div class="cb" style="left:431px;top:400px;width:11px;height:11px;"></div>
<div class="t " style="left:451.00px;top:400.43px;font-size:11.3px;">Scale UI To Font</div>
<div class="info" style="left:387px;top:425px"></div>
<div class="t " style="left:420.80px;top:422.51px;font-size:11.68px;">Changes will take effect the next time you start Photoshop.</div>
<div class="cb" style="left:167px;top:492px;width:11px;height:11px;"></div>
<div class="t " style="left:187.10px;top:492.81px;font-size:11.33px;">Show Channels in Color</div>
<div class="cbc" style="left:167px;top:516px;width:11px;height:11px;"></div>
<svg class="a" style="left:167px;top:516px" width="11" height="11"><path d="M2.6 5.4 L5 7.3 L8.5 3.6" fill="none" stroke="#262626" stroke-width="1.9" stroke-linecap="round" stroke-linejoin="round"/></svg>
<div class="t " style="left:187.10px;top:516.78px;font-size:11.36px;">Show Menu Colors</div>
<div class="cbc" style="left:330px;top:492px;width:11px;height:11px;"></div>
<svg class="a" style="left:330px;top:492px" width="11" height="11"><path d="M2.6 5.4 L5 7.3 L8.5 3.6" fill="none" stroke="#262626" stroke-width="1.9" stroke-linecap="round" stroke-linejoin="round"/></svg>
<div class="t " style="left:350.10px;top:492.77px;font-size:11.38px;">Dynamic Color Sliders</div>
<div class="cbc" style="left:330px;top:516px;width:11px;height:11px;"></div>
<svg class="a" style="left:330px;top:516px" width="11" height="11"><path d="M2.6 5.4 L5 7.3 L8.5 3.6" fill="none" stroke="#262626" stroke-width="1.9" stroke-linecap="round" stroke-linejoin="round"/></svg>
<div class="t " style="left:350.10px;top:516.64px;font-size:11.53px;">Show Simplified Right Click And Flyout Menus</div>
<div class="btn" style="left:959px;top:51px;width:55px;height:24px;border:1.6px solid #dcdcdc;"></div>
<div class="t " style="left:786.50px;width:400px;text-align:center;top:57.14px;font-size:10.7px;">OK</div>
<div class="btn" style="left:959px;top:83px;width:55px;height:24px;"></div>
<div class="t " style="left:786.50px;width:400px;text-align:center;top:88.23px;font-size:10.6px;">Cancel</div>
<div class="btn" style="left:959px;top:115px;width:55px;height:24px;"></div>
<div class="t " style="left:786.50px;width:400px;text-align:center;top:120.63px;font-size:10.6px;">Prev</div>
<div class="btn" style="left:959px;top:147px;width:55px;height:24px;"></div>
<div class="t " style="left:786.50px;width:400px;text-align:center;top:152.43px;font-size:10.6px;">Next</div>
</body></html>
